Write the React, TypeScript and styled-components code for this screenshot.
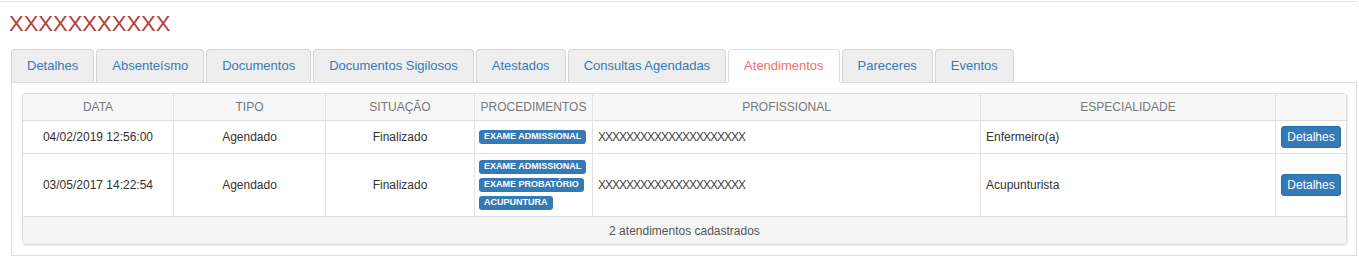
import React from "react";
import { styled, createGlobalStyle } from "styled-components";

const GlobalStyle = createGlobalStyle`
  * {
    box-sizing: border-box;
  }

  body {
    margin: 0;
    background: #fff;
    font-family: "Liberation Sans", Arial, sans-serif;
    font-size: 12px;
    color: #333;
  }
`;

const Page = styled.main`
  width: 1357px;
  margin-top: 1px;
  border-top: 1px solid #e5e5e5;
`;

const Title = styled.h3`
  margin: 0;
  padding: 9px 0 0 9px;
  font-size: 22px;
  font-weight: normal;
  line-height: 26px;
  color: #b0403c;
`;

const Section = styled.section`
  margin: 12px 0 0 11px;
`;

const TabBar = styled.ul`
  display: flex;
  margin: 0;
  padding: 0;
  list-style: none;
  border-bottom: 1px solid #ddd;
`;

const Tab = styled.li<{ $active?: boolean }>`
  margin-right: 2px;
  margin-bottom: -1px;
  padding: 6px 15px;
  font-size: 13px;
  line-height: 20px;
  border: 1px solid ${(p) => (p.$active ? "#ddd" : "#d4d4d4")};
  border-bottom-color: ${(p) => (p.$active ? "transparent" : "#ddd")};
  border-radius: 4px 4px 0 0;
  background: ${(p) => (p.$active ? "#fff" : "#eee")};
  color: ${(p) => (p.$active ? "#f2716b" : "#337ab7")};
  cursor: pointer;
`;

const Panel = styled.div`
  padding: 10px;
  border: 1px solid #ddd;
  border-top: none;
`;

const Table = styled.table`
  width: 100%;
  table-layout: fixed;
  border-collapse: separate;
  border-spacing: 0;
  border: 1px solid #ddd;
  border-radius: 3px;
  box-shadow: 1px 1px 1px rgba(0, 0, 0, 0.06);
  overflow: hidden;
`;

const Th = styled.th`
  height: 27px;
  padding: 0 5px;
  font-size: 12px;
  font-weight: normal;
  text-transform: uppercase;
  color: #777;
  background: #f7f7f7;
  text-align: center;
  border-right: 1px solid #e3e3e3;
  border-bottom: 1px solid #ddd;

  &:last-child {
    border-right: none;
  }
`;

const Td = styled.td<{ $align?: "left" | "center" }>`
  padding: 5px;
  font-size: 12px;
  text-align: ${(p) => p.$align ?? "center"};
  vertical-align: middle;
  border-right: 1px solid #e3e3e3;
  border-bottom: 1px solid #ddd;

  &:last-child {
    border-right: none;
  }
`;

const Name = styled.span`
  letter-spacing: -1px;
  color: #444;
`;

const Labels = styled.div`
  display: flex;
  flex-direction: column;
  align-items: flex-start;
  gap: 4px;
  padding: 1px 0;
  margin-left: -1px;
`;

const Label = styled.span`
  display: inline-block;
  padding: 2px 5px 3px;
  font-size: 9px;
  font-weight: bold;
  line-height: 9px;
  color: #fff;
  background: #337ab7;
  border-radius: 3px;
  white-space: nowrap;
`;

const Button = styled.button`
  padding: 1px 5px;
  font-family: inherit;
  font-size: 12px;
  line-height: 18px;
  color: #fff;
  background: #337ab7;
  border: 1px solid #2e6da4;
  border-radius: 3px;
  cursor: pointer;
`;

const Footer = styled.td`
  height: 27px;
  padding: 0 5px;
  font-size: 12px;
  text-align: center;
  color: #555;
  background: #f5f5f5;
`;

const tabs = [
  "Detalhes",
  "Absenteísmo",
  "Documentos",
  "Documentos Sigilosos",
  "Atestados",
  "Consultas Agendadas",
  "Atendimentos",
  "Pareceres",
  "Eventos",
];

const columns = [
  { title: "Data", width: 151 },
  { title: "Tipo", width: 152 },
  { title: "Situação", width: 149 },
  { title: "Procedimentos", width: 118 },
  { title: "Profissional", width: 388 },
  { title: "Especialidade", width: 295 },
  { title: "", width: 70 },
];

const rows = [
  {
    date: "04/02/2019 12:56:00",
    type: "Agendado",
    status: "Finalizado",
    procedures: ["EXAME ADMISSIONAL"],
    professional: "XXXXXXXXXXXXXXXXXXXXX",
    specialty: "Enfermeiro(a)",
  },
  {
    date: "03/05/2017 14:22:54",
    type: "Agendado",
    status: "Finalizado",
    procedures: ["EXAME ADMISSIONAL", "EXAME PROBATÓRIO", "ACUPUNTURA"],
    professional: "XXXXXXXXXXXXXXXXXXXXX",
    specialty: "Acupunturista",
  },
];

function App() {
  return (
    <Page>
      <GlobalStyle />
      <Title>XXXXXXXXXXX</Title>
      <Section>
        <TabBar>
          {tabs.map((tab) => (
            <Tab key={tab} $active={tab === "Atendimentos"}>
              {tab}
            </Tab>
          ))}
        </TabBar>
        <Panel>
          <Table>
            <colgroup>
              {columns.map((col, i) => (
                <col key={i} style={{ width: col.width }} />
              ))}
            </colgroup>
            <thead>
              <tr>
                {columns.map((col, i) => (
                  <Th key={i}>{col.title}</Th>
                ))}
              </tr>
            </thead>
            <tbody>
              {rows.map((row) => (
                <tr key={row.date}>
                  <Td>{row.date}</Td>
                  <Td>{row.type}</Td>
                  <Td>{row.status}</Td>
                  <Td $align="left">
                    <Labels>
                      {row.procedures.map((p) => (
                        <Label key={p}>{p}</Label>
                      ))}
                    </Labels>
                  </Td>
                  <Td $align="left">
                    <Name>{row.professional}</Name>
                  </Td>
                  <Td $align="left">{row.specialty}</Td>
                  <Td>
                    <Button>Detalhes</Button>
                  </Td>
                </tr>
              ))}
            </tbody>
            <tfoot>
              <tr>
                <Footer colSpan={7}>2 atendimentos cadastrados</Footer>
              </tr>
            </tfoot>
          </Table>
        </Panel>
      </Section>
    </Page>
  );
}

export default App;
